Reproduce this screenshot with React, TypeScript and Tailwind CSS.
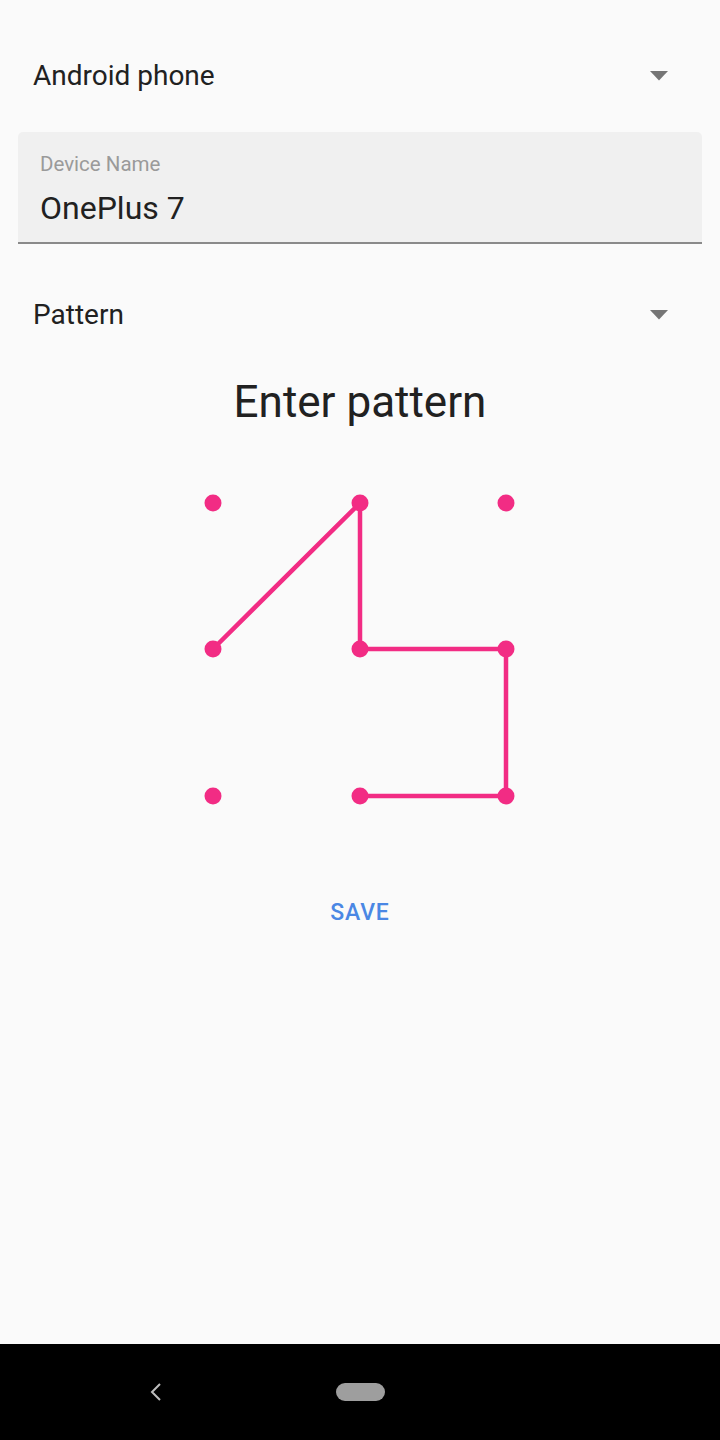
const PINK = '#f22c84';

const cols = [213, 360, 506];
const rows = [502, 648, 795];
const path: [number, number][] = [
  [0, 1],
  [1, 0],
  [1, 1],
  [2, 1],
  [2, 2],
  [1, 2],
];

function Caret() {
  return (
    <svg width="18" height="10" viewBox="0 0 18 10" className="shrink-0">
      <path d="M0 0 L18 0 L9 9.5 Z" fill="#757575" />
    </svg>
  );
}

function DropdownRow({ label }: { label: string }) {
  return (
    <div className="flex h-[96px] items-center justify-between pl-[33px] pr-[52px]">
      <span className="text-[28px] text-[#212121]">{label}</span>
      <Caret />
    </div>
  );
}

function PatternGrid() {
  // svg covers x 190..530, y 480..820
  const ox = 190;
  const oy = 480;
  const pts = path.map(([c, r]) => `${cols[c] - ox},${rows[r] - oy}`).join(' ');
  return (
    <svg width="340" height="340" viewBox="0 0 340 340">
      <polyline points={pts} fill="none" stroke={PINK} strokeWidth="4.5" strokeLinejoin="round" />
      {rows.map((y) =>
        cols.map((x) => (
          <circle key={`${x}-${y}`} cx={x - ox} cy={y - oy} r="8.5" fill={PINK} />
        ))
      )}
    </svg>
  );
}

export default function App() {
  return (
    <div
      className="flex h-[1440px] w-[720px] flex-col bg-[#fafafa]"
      style={{ fontFamily: 'Roboto, "Liberation Sans", sans-serif' }}
    >
      <div className="flex-1">
        <div className="pt-[28px]">
          <DropdownRow label="Android phone" />
        </div>

        {/* Device name text field */}
        <div className="mx-[18px] mt-[8px] rounded-t-[5px] border-b-2 border-[#8a8a8a] bg-[#f0f0f0] px-[22px] pb-[14px] pt-[20px]">
          <div className="text-[20.5px] leading-[24px] text-[#9a9a9a]">Device Name</div>
          <div className="mt-[12px] text-[32px] leading-[40px] text-[#212121]">OnePlus 7</div>
        </div>

        <div className="mt-[23px]">
          <DropdownRow label="Pattern" />
        </div>

        <div className="mt-[10px] text-center text-[44px] leading-[58px] text-[#212121]">Enter pattern</div>

        <div className="mt-[50px] flex justify-center">
          <PatternGrid />
        </div>

        <div className="mt-[75px] flex justify-center">
          <button className="text-[23px] font-medium tracking-[0.8px] text-[#4a87e4]">SAVE</button>
        </div>
      </div>

      {/* Navigation bar */}
      <div className="flex h-[96px] items-center bg-black">
        <div className="flex w-[312px] justify-center">
          <svg width="14" height="20" viewBox="0 0 14 20">
            <path d="M11 2 L3 10 L11 18" fill="none" stroke="#bdbdbd" strokeWidth="2" />
          </svg>
        </div>
        <div className="ml-[24px] h-[18px] w-[49px] rounded-full bg-[#9e9e9e]" />
      </div>
    </div>
  );
}
